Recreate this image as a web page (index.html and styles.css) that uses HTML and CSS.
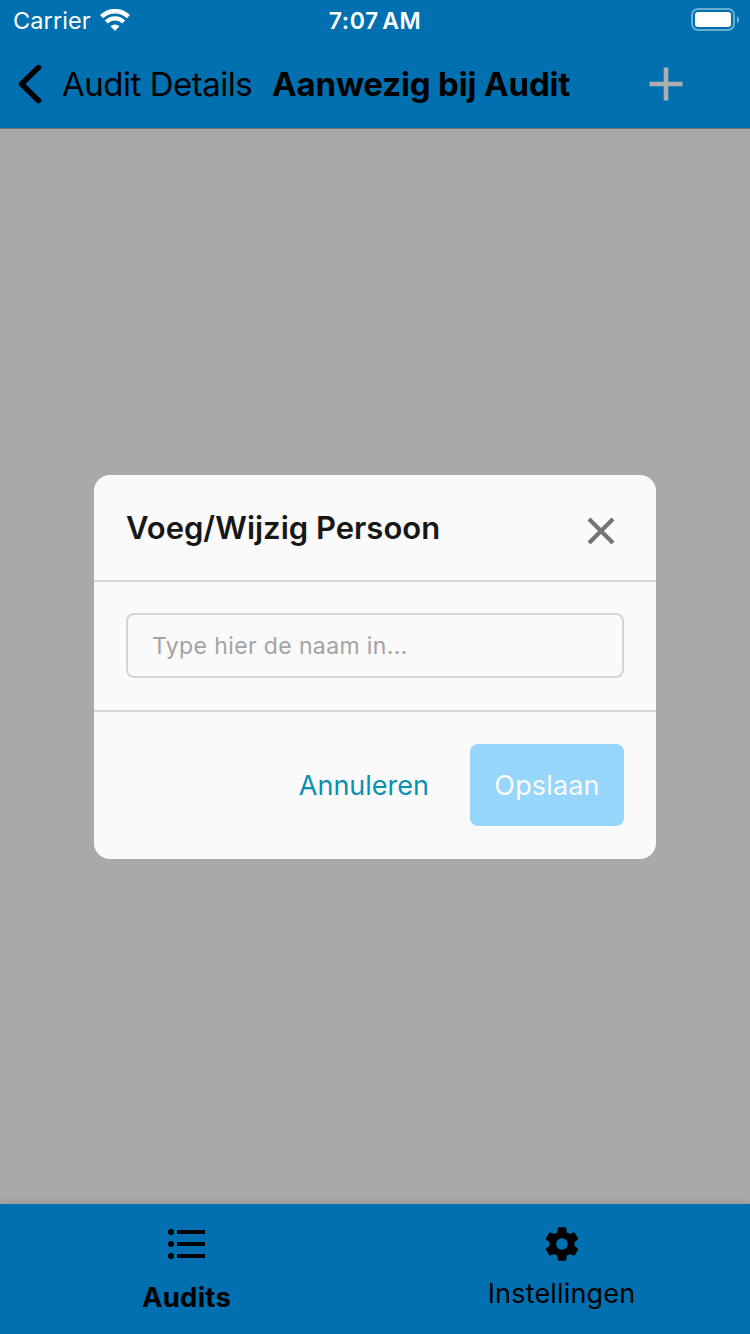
FILE: index.html
```html
<!DOCTYPE html>
<html lang="nl">
<head>
<meta charset="utf-8">
<title>Aanwezig bij Audit</title>
<link rel="stylesheet" href="styles.css">
</head>
<body>
<div class="screen">
  <header class="top">
    <div class="status">
      <div class="carrier"><span class="carrier-name">Carrier</span>
        <svg class="wifi" width="30" height="22" viewBox="0 0 30 22" fill="none" stroke="#fff"><path d="M1.6 7.700a19 19 0 0 1 26.800 0" stroke-width="4.500"/><path d="M6.300 12.900a12.300 12.300 0 0 1 17.400 0" stroke-width="4.200"/><path d="M10.500 17.300a6.500 6.500 0 0 1 9 0L15 22z" fill="#fff" stroke="none"/></svg>
      </div>
      <span class="time">7:07 AM</span>
      <svg class="battery" width="48" height="24" viewBox="0 0 48 24"><rect x="1" y="1" width="42" height="21" rx="6" fill="none" stroke="#fff" stroke-opacity=".42" stroke-width="2"/><rect x="4" y="4" width="36" height="15" rx="3" fill="#fff"/><path d="M46 8q2 1 2 3.500t-2 3.500z" fill="#fff" fill-opacity=".5"/></svg>
    </div>
    <nav class="navbar">
      <svg class="back" width="26" height="40" viewBox="0 0 26 40"><path d="M21.500 3.500 4.500 20l17 16.500" fill="none" stroke="#000" stroke-width="5.400" stroke-linecap="round" stroke-linejoin="round"/></svg>
      <span class="back-label">Audit Details</span>
      <h1 class="title">Aanwezig bij Audit</h1>
      <svg class="add" width="34" height="34" viewBox="0 0 34 34"><path d="M17 .5v33M.5 17h33" stroke="#aeaeae" stroke-width="4.600"/></svg>
    </nav>
  </header>
  <main class="content">
    <section class="modal">
      <div class="modal-head">
        <h2 class="modal-title">Voeg/Wijzig Persoon</h2>
        <svg class="close" width="28" height="28" viewBox="0 0 28 28"><path d="m2 2 24 24M26 2 2 26" stroke="#737373" stroke-width="4.200"/></svg>
      </div>
      <div class="modal-body"><div class="field"><span class="placeholder">Type hier de naam in...</span></div></div>
      <div class="modal-foot">
        <span class="cancel">Annuleren</span>
        <div class="save"><span class="save-label">Opslaan</span></div>
      </div>
    </section>
  </main>
  <footer class="tabs">
    <div class="tab">
      <svg class="list" width="38" height="30" viewBox="0 0 38 30"><circle cx="3" cy="3" r="3"/><circle cx="3" cy="15" r="3"/><circle cx="3" cy="27" r="3"/><path d="M9 3h28M9 15h28M9 27h28" stroke="#000" stroke-width="4"/></svg>
      <span class="tab-label active">Audits</span>
    </div>
    <div class="tab">
      <svg class="gear" width="40" height="40" viewBox="0 0 24 24"><path d="M19.430 12.980c.04-.32.07-.64.07-.98s-.03-.66-.07-.98l2.110-1.650c.19-.15.24-.42.12-.64l-2-3.460c-.12-.22-.39-.3-.61-.22l-2.490 1c-.52-.4-1.080-.73-1.690-.98l-.38-2.650C14.460 2.180 14.250 2 14 2h-4c-.25 0-.46.18-.49.42l-.38 2.650c-.61.25-1.170.59-1.690.98l-2.490-1c-.23-.09-.49 0-.61.22l-2 3.460c-.13.22-.07.49.12.64l2.110 1.650c-.04.32-.07.65-.07.98s.03.66.07.98l-2.110 1.650c-.19.15-.24.42-.12.64l2 3.460c.12.22.39.3.61.22l2.490-1c.52.4 1.080.73 1.690.98l.38 2.650c.03.24.24.42.49.42h4c.25 0 .46-.18.49-.42l.38-2.650c.61-.25 1.170-.59 1.690-.98l2.490 1c.23.09.49 0 .61-.22l2-3.460c.12-.22.07-.49-.12-.64l-2.110-1.650zM12 15.500c-1.930 0-3.500-1.570-3.500-3.500s1.570-3.500 3.500-3.500 3.500 1.570 3.500 3.500-1.570 3.500-3.500 3.500z"/></svg>
      <span class="tab-label">Instellingen</span>
    </div>
  </footer>
</div>
</body>
</html>
```
FILE: styles.css
```css
* { box-sizing: border-box; }
body { margin: 0; font-family: Inter, "Liberation Sans", sans-serif; color: #000; }
h1, h2 { margin: 0; }
svg { display: block; flex: none; }
span, h1, h2 { white-space: nowrap; }
.screen { width: 750px; height: 1334px; display: flex; flex-direction: column; background: #a9a9a9; }
.top { height: 129px; background: #0070b0; border-bottom: 1px solid #6f7476; }
.status { height: 40px; display: grid; grid-template-columns: 1fr auto 1fr; align-items: center; padding: 0 11px 0 13px; color: #fff; }
.carrier { display: flex; align-items: center; gap: 9px; font-size: 23.500px; }
.carrier-name { line-height: 38px; padding-top: 2px; letter-spacing: 0.1px; }
.time { font-size: 23px; font-weight: 600; line-height: 38px; padding-top: 2px; letter-spacing: 0.6px; word-spacing: -3px; margin-right: 2px; }
.battery { justify-self: end; }
.navbar { height: 88px; display: flex; align-items: center; }
.back { margin-left: 17px; }
.back-label { margin-left: 19px; width: 210px; font-size: 33px; letter-spacing: -0.480px; }
.title { width: 377px; font-size: 33px; font-weight: 700; letter-spacing: -0.150px; }
.content { flex: 1; display: flex; justify-content: center; padding-top: 346px; }
.modal { width: 562px; height: 384px; border-radius: 16px; background: #fafafa; }
.modal-head { height: 107px; display: flex; justify-content: space-between; align-items: center; padding: 0 41px 0 32px; border-bottom: 2px solid #d4d4d4; }
.modal-title { font-size: 31px; font-weight: 600; color: #171717; }
.close { margin-top: 6px; }
.modal-body { height: 130px; padding: 31px 32px 0; border-bottom: 2px solid #d4d4d4; }
.field { height: 65px; display: flex; align-items: center; padding-left: 24px; border: 2px solid #d4d4d4; border-radius: 8px; }
.placeholder { font-size: 23px; letter-spacing: 0.380px; color: #a3a3a3; }
.modal-foot { height: 147px; display: flex; align-items: flex-start; justify-content: flex-end; padding: 32px 32px 0; font-size: 27px; line-height: 83px; }
.cancel { color: #0891b2; margin-right: 41px; }
.save { width: 154px; height: 82px; display: flex; justify-content: center; border-radius: 8px; background: #97d6fb; color: #fafafa; }
.save-label { letter-spacing: 0.150px; }
.tabs { height: 130px; display: grid; grid-template-columns: 1fr 1fr; background: #0070b0; box-shadow: 0 -1px 8px rgba(0,0,0,.13); }
.tab { display: flex; flex-direction: column; align-items: center; padding-right: 2px; }
.list { margin-top: 25px; }
.gear { margin-top: 20px; }
.tab-label { font-size: 27px; line-height: 36px; margin-top: 12px; letter-spacing: 0.170px; }
.active { font-size: 27.500px; font-weight: 700; margin-top: 20px; letter-spacing: 0.250px; }
```
